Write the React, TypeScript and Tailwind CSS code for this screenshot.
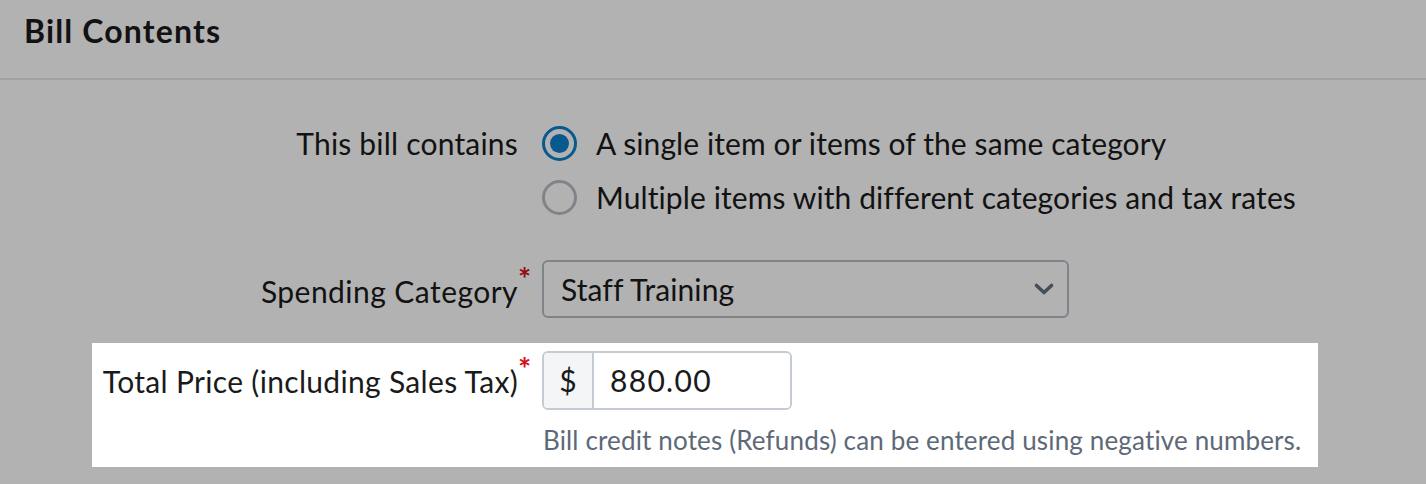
import React, { useState } from 'react';

const OPTIONS = [
    { id: 'single', label: 'A single item or items of the same category' },
    { id: 'multi', label: 'Multiple items with different categories and tax rates' },
];

const Required: React.FC = () => (
    <span className="absolute left-full -top-[6px] text-[31px] leading-none font-bold text-[#d4101c]">*</span>
);

const Radio: React.FC<{ checked: boolean }> = ({ checked }) => (
    <span
        className={
            checked
                ? 'w-[35px] h-[35px] shrink-0 rounded-full border-[3px] border-[#0e7fcc] flex items-center justify-center'
                : 'w-[35px] h-[35px] shrink-0 rounded-full border-[3px] border-[#b8bec4]'
        }
    >
        {checked && <span className="w-[19px] h-[19px] rounded-full bg-[#0e7fcc]" />}
    </span>
);

const App: React.FC = () => {
    const [contains, setContains] = useState('single');
    const [price, setPrice] = useState('880.00');

    return (
        <div className="relative min-h-screen bg-white text-[#1a1a1a] font-['Lato',sans-serif] tracking-[0.1px]">
            <div className="h-[80px] border-b-2 border-[#e6e6ec] px-6 pt-[11px]">
                <h2 className="text-[32px] leading-[40px] font-bold tracking-[1.15px]">Bill Contents</h2>
            </div>

            <div className="flex mt-9">
                <div className="w-[518px] shrink-0 h-[54px] flex items-center justify-end text-[30px] tracking-[0.2px] whitespace-nowrap">
                    This bill contains
                </div>
                <div className="ml-6 flex flex-col">
                    {OPTIONS.map(o => (
                        <label
                            key={o.id}
                            onClick={() => setContains(o.id)}
                            className="h-[54px] flex items-center gap-[19px] text-[30px] cursor-pointer whitespace-nowrap"
                        >
                            <Radio checked={contains === o.id} />
                            {o.label}
                        </label>
                    ))}
                </div>
            </div>

            <div className="flex items-center mt-9">
                <div className="w-[518px] shrink-0 flex justify-end text-[30px] tracking-[0.45px] whitespace-nowrap">
                    <span className="relative mt-[4px]">
                        Spending Category
                        <Required />
                    </span>
                </div>
                <button className="ml-6 w-[527px] h-[58px] rounded-[6px] border-2 border-[#b5bdc5] pl-[17px] pr-[13px] flex items-center justify-between text-[30px]">
                    <span>Staff Training</span>
                    <svg width="20" height="12" viewBox="0 0 20 12" fill="none">
                        <path d="M2.5 2.5 L10 9.5 L17.5 2.5" stroke="#647280" strokeWidth="3.6" strokeLinecap="round" strokeLinejoin="round" />
                    </svg>
                </button>
            </div>

            {/* spotlight overlay for the tour step */}
            <div className="fixed inset-0 bg-black/30" />

            <div className="relative z-10 ml-[92px] mt-[25px] w-[1226px] bg-white pl-3 pt-2 pb-3">
                <div className="flex items-center">
                    <div className="w-[414px] shrink-0 flex justify-end text-[30px] tracking-[0.32px] whitespace-nowrap">
                        <span className="relative mt-[2px]">
                            Total Price (including Sales Tax)
                            <Required />
                        </span>
                    </div>
                    <div className="ml-6 w-[250px] h-[59px] flex rounded-[6px] border-2 border-[#c4cbd2] overflow-hidden text-[30px]">
                        <span className="w-[50px] shrink-0 bg-[#f3f5f7] border-r-2 border-[#c4cbd2] flex items-center justify-center">$</span>
                        <input
                            value={price}
                            onChange={e => setPrice(e.target.value)}
                            className="min-w-0 flex-1 pl-4 outline-none bg-white tracking-[1.3px]"
                        />
                    </div>
                </div>
                <p className="ml-[439px] mt-[15px] text-[26px] leading-[30px] tracking-[0.15px] text-[#5d6977] whitespace-nowrap">
                    Bill credit notes (Refunds) can be entered using negative numbers.
                </p>
            </div>
        </div>
    );
};

export default App;
